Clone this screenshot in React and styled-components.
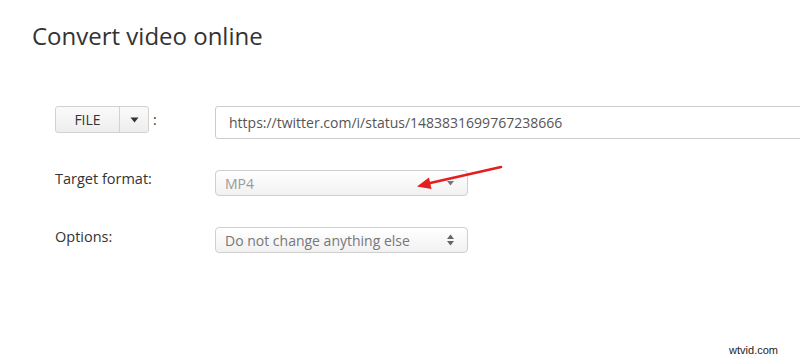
import React from "react";
import styled, { createGlobalStyle } from "styled-components";

const Global = createGlobalStyle`
  html, body { margin: 0; padding: 0; background: #fff; }
  body { font-family: "Open Sans", "Liberation Sans", sans-serif; color: #333; overflow: hidden; }
  #root { width: 800px; height: 361px; position: relative; overflow: hidden; }
`;

const Page = styled.div`
  position: relative;
  width: 800px;
  height: 361px;
  overflow: hidden;
`;

const Title = styled.h1`
  margin: 0;
  padding: 18px 0 0 32px;
  font-size: 24px;
  font-weight: 400;
  line-height: 35px;
  color: #333;
`;

const Form = styled.div`
  margin-top: 53px;
  padding-left: 55px;
  display: flex;
  flex-direction: column;
  gap: 31px;
`;

const Row = styled.div`
  display: grid;
  grid-template-columns: 160px 1fr;
  align-items: start;
`;

const Label = styled.div`
  font-size: 14.5px;
  line-height: 20px;
  margin-top: ${(p) => p.$offset || 0}px;
  color: #333;
`;

const FileCell = styled.div`
  display: flex;
  align-items: center;
  gap: 4px;
`;

const SplitButton = styled.div`
  display: flex;
  height: 27px;
  box-sizing: border-box;
  border: 1px solid #d2d2d2;
  border-radius: 3px;
  background: linear-gradient(#fafafa, #eeeeee);
  overflow: hidden;
`;

const ButtonPart = styled.div`
  width: ${(p) => p.$w}px;
  display: flex;
  align-items: center;
  justify-content: center;
  font-size: 14px;
  color: #333;
  border-left: ${(p) => (p.$divider ? "1px solid #d2d2d2" : "none")};
`;

const Colon = styled.span`
  font-size: 14px;
  line-height: 27px;
  color: #333;
`;

const TextInput = styled.div`
  width: 620px;
  height: 33px;
  box-sizing: border-box;
  border: 1px solid #cccccc;
  border-radius: 3px;
  display: flex;
  align-items: center;
  padding-left: 13px;
  font-size: 14px;
  color: #555;
  background: #fff;
`;

const Select = styled.div`
  width: 253px;
  height: 26px;
  box-sizing: border-box;
  border: 1px solid #cfcfcf;
  border-radius: 4px;
  background: linear-gradient(#ffffff, #f1f1f1);
  display: flex;
  align-items: center;
  justify-content: space-between;
  padding: 0 13px 0 9px;
  font-size: 14px;
  color: ${(p) => (p.$muted ? "#9a9a9a" : "#777")};
`;

const Overlay = styled.svg`
  position: absolute;
  left: 0;
  top: 0;
  pointer-events: none;
`;

const Watermark = styled.div`
  position: absolute;
  right: 22px;
  bottom: 5px;
  font-family: "Liberation Sans", Arial, sans-serif;
  font-size: 11px;
  color: #222;
`;

const Caret = () => (
  <svg width="9" height="6" viewBox="0 0 9 6">
    <path d="M0.5 0.5 L8.5 0.5 L4.5 5.5 Z" fill="#333" />
  </svg>
);

const SmallDown = () => (
  <svg width="7" height="6" viewBox="0 0 7 6">
    <path d="M0 1 L7 1 L3.5 5.5 Z" fill="#777" />
  </svg>
);

const UpDown = () => (
  <svg width="7" height="12" viewBox="0 0 7 12">
    <path d="M0 5 L7 5 L3.5 0.5 Z" fill="#666" />
    <path d="M0 7 L7 7 L3.5 11.5 Z" fill="#666" />
  </svg>
);

export default function App() {
  return (
    <Page>
      <Global />
      <Title>Convert video online</Title>
      <Form>
        <Row>
          <FileCell>
            <SplitButton>
              <ButtonPart $w={63}>FILE</ButtonPart>
              <ButtonPart $w={28} $divider>
                <Caret />
              </ButtonPart>
            </SplitButton>
            <Colon>:</Colon>
          </FileCell>
          <TextInput>https://twitter.com/i/status/1483831699767238666</TextInput>
        </Row>
        <Row>
          <Label $offset={-1}>Target format:</Label>
          <Select $muted>
            <span>MP4</span>
            <SmallDown />
          </Select>
        </Row>
        <Row>
          <Label>Options:</Label>
          <Select>
            <span>Do not change anything else</span>
            <UpDown />
          </Select>
        </Row>
      </Form>
      <Overlay width="800" height="361" viewBox="0 0 800 361">
        <line x1="501" y1="167" x2="428" y2="183.5" stroke="#e31e1e" strokeWidth="2.6" strokeLinecap="round" />
        <path d="M417 186.5 L429 177.5 L431.5 189 Z" fill="#e31e1e" />
      </Overlay>
      <Watermark>wtvid.com</Watermark>
    </Page>
  );
}
